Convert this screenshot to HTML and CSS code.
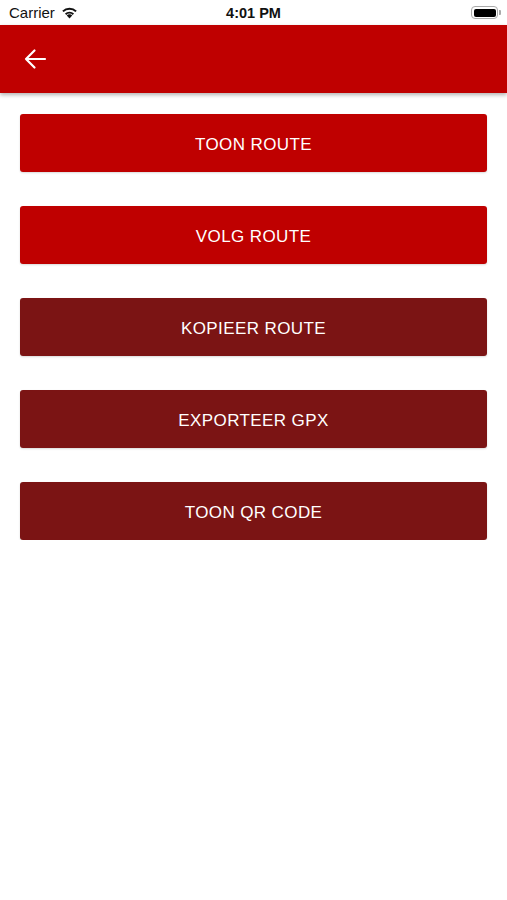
FILE: index.html
```html
<!DOCTYPE html>
<html lang="nl">
<head>
  <meta charset="UTF-8">
  <title>Route</title>
  <meta name="viewport" content="width=device-width, initial-scale=1">
  <link rel="stylesheet" href="styles.css">
</head>
<body>
<div class="statusbar">
  <div class="carrier">
    Carrier
    <svg class="wifi" width="17" height="13" viewBox="0 0 18 13">
      <path d="M9 12.8 L6.1 9.7 A4 4 0 0 1 11.9 9.7 Z" fill="#111"/>
      <path d="M4.2 7.6 A6.8 6.8 0 0 1 13.8 7.6 L12.4 9.1 A4.8 4.8 0 0 0 5.6 9.1 Z" fill="#111"/>
      <path d="M1.3 4.6 A10.9 10.9 0 0 1 16.7 4.6 L15.2 6.1 A8.8 8.8 0 0 0 2.8 6.1 Z" fill="#111"/>
    </svg>
  </div>
  <div class="time">4:01 PM</div>
  <div class="battery">
    <span class="battery-body"><span class="battery-level"></span></span>
    <span class="battery-cap"></span>
  </div>
</div>

<header class="appbar">
  <svg class="back" width="30" height="30" viewBox="0 0 30 30">
    <path d="M25 15H6 M14.5 6.5 L6 15 L14.5 23.5" fill="none" stroke="#fff" stroke-width="2.2" stroke-linecap="round" stroke-linejoin="round"/>
  </svg>
</header>

<main class="actions">
  <button class="btn btn-primary">TOON ROUTE</button>
  <button class="btn btn-primary">VOLG ROUTE</button>
  <button class="btn btn-dark">KOPIEER ROUTE</button>
  <button class="btn btn-dark">EXPORTEER GPX</button>
  <button class="btn btn-dark">TOON QR CODE</button>
</main>
</body>
</html>
```

FILE: styles.css
```css
body {
  margin: 0;
  font-family: "Liberation Sans", Arial, sans-serif;
  background: #fff;
}
.statusbar {
  height: 25px;
  display: flex;
  align-items: center;
  justify-content: space-between;
  padding: 0 6px 0 9px;
  font-size: 15px;
  color: #111;
  position: relative;
}
.carrier {
  display: flex;
  align-items: center;
  gap: 6px;
}
.time {
  position: absolute;
  left: 0;
  right: 0;
  text-align: center;
  font-weight: bold;
  font-size: 14.5px;
}
.battery {
  display: flex;
  align-items: center;
}
.battery-body {
  width: 27px;
  height: 13px;
  border: 1px solid #aaa;
  border-radius: 4px;
  padding: 1.5px;
  box-sizing: border-box;
  display: flex;
}
.battery-level {
  flex: 1;
  background: #000;
  border-radius: 2px;
}
.battery-cap {
  width: 2px;
  height: 5px;
  background: #aaa;
  border-radius: 0 1px 1px 0;
  margin-left: 1px;
}
.appbar {
  height: 68px;
  background: #bf0000;
  display: flex;
  align-items: center;
  padding-left: 20px;
  box-shadow: 0 2px 4px rgba(0,0,0,0.3);
}
.actions {
  display: flex;
  flex-direction: column;
  gap: 34px;
  padding: 21px 20px 0 20px;
}
.btn {
  height: 58px;
  border: none;
  border-radius: 3px;
  color: #fff;
  font-family: "Liberation Sans", Arial, sans-serif;
  font-size: 17px;
  letter-spacing: 0.4px;
  padding-top: 4px;
  box-shadow: 0 1px 2px rgba(0,0,0,0.15);
}
.btn-primary {
  background: #bf0000;
}
.btn-dark {
  background: #7b1414;
}
```
